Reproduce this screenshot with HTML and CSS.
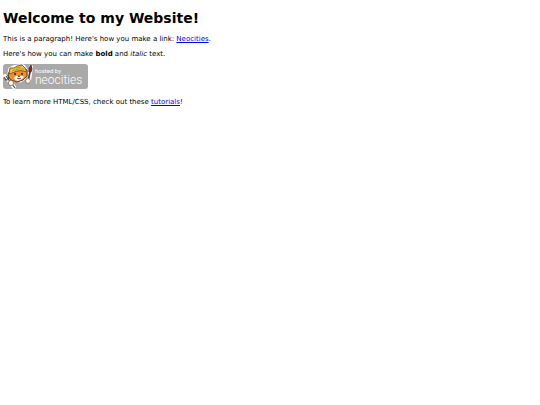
FILE: index.html
```html
<!DOCTYPE html>
<html lang="en">
<head>
    <meta charset="UTF-8">
    <meta name="viewport" content="width=device-width, initial-scale=1.0">
    <title>The web site of neocities</title>
    <link rel="stylesheet" href="styles.css">
</head>
<body>
    <h1>Welcome to my Website!</h1>

    <p>This is a paragraph! Here's how you make a link: <a href="https://neocities.org">Neocities</a>.</p>

    <p>Here's how you can make <strong>bold</strong> and <em>italic</em> text.</p>

    <!-- hosting badge: cat with a fork and a brush -->
    <svg class="badge" viewBox="0 0 85 25" role="img" aria-label="hosted by neocities">
        <rect width="85" height="25" rx="3" fill="#a9a9a9"/>
        <!-- white outline -->
        <path d="M5 9L6 4L10 2L15 1L21 1L24 5L24 10L22 15L18 18L10 17L6 14Z" fill="#fff" stroke="#fff" stroke-linejoin="round"/>
        <path d="M2 12L8 19L11 23M28 3L26 17" stroke="#fff" stroke-width="4" stroke-linecap="round"/>
        <!-- head -->
        <path d="M6 8L5 12L8 16L14 18L20 16L24 12L24 6L20 4L10 5Z" fill="#ed9035" stroke="#4b3021" stroke-width=".9"/>
        <path d="M11 14Q13 11 15 12L17 12Q19 11 21 13L19 15L15 17L12 16Z" fill="#fff4e4"/>
        <!-- hat -->
        <path d="M6 9L7 4L11 4L14 2L19 1L22 4L24 8Q19 6 14 7L7 10Z" fill="#f2c13b" stroke="#76501f" stroke-width=".9"/>
        <path d="M9 7Q15 4 21 5M13 4L18 3" fill="none" stroke="#bd832c" stroke-width=".8"/>
        <ellipse cx="12" cy="10" rx=".8" ry="1.2" fill="#38231b"/>
        <ellipse cx="19" cy="10" rx=".8" ry="1.2" fill="#38231b"/>
        <path d="M15 12L17 12L16 13ZM14 14Q16 16 18 14" fill="#9b3929" stroke="#633125" stroke-width=".6"/>
        <!-- fork -->
        <path d="M1 13L3 16L6 15L5 11M3 12L5 15L8 19M9 20L12 24" fill="none" stroke="#46494b" stroke-width="1.2"/>
        <path d="M4 15L7 18" stroke="#bfc4c5" stroke-width=".5"/>
        <!-- brush -->
        <path d="M27 8L25 17" stroke="#5b3028" stroke-width="1.7"/>
        <path d="M28 1Q30 5 28 8L26 8Q25 4 28 1Z" fill="#8f2925" stroke="#482622" stroke-width=".8"/>
        <!-- paws -->
        <circle cx="8" cy="19" r="2.6" fill="#fff" stroke="#8b6440" stroke-width=".8"/>
        <circle cx="25" cy="17" r="2.4" fill="#fff" stroke="#8b6440" stroke-width=".8"/>
        <text class="badge-small" x="32" y="9">hosted by</text>
        <text class="badge-name" x="32" y="20">neocities</text>
    </svg>

    <p>To learn more HTML/CSS, check out these <a href="https://neocities.org/tutorials">tutorials</a>!</p>
</body>
</html>
```
FILE: styles.css
```css
body {
    margin: 10px 3px;
    background-color: white;
    color: black;
    font-family: Verdana, "DejaVu Sans", sans-serif;
    font-size: 7px;
    line-height: 10px;
}

h1 {
    margin: 0 0 8px;
    font-size: 14px;
    line-height: 16px;
}

p {
    margin: 5px 0;
}

a {
    color: #0000ee;
}

.badge {
    display: block;
    width: 85px;
    height: 25px;
    margin: 5px 0 8px;
}

.badge text {
    fill: #fff;
    font-family: Roboto, sans-serif;
}

.badge-small {
    font-size: 6px;
}

.badge-name {
    font-size: 12px;
    font-weight: 300;
}
```
